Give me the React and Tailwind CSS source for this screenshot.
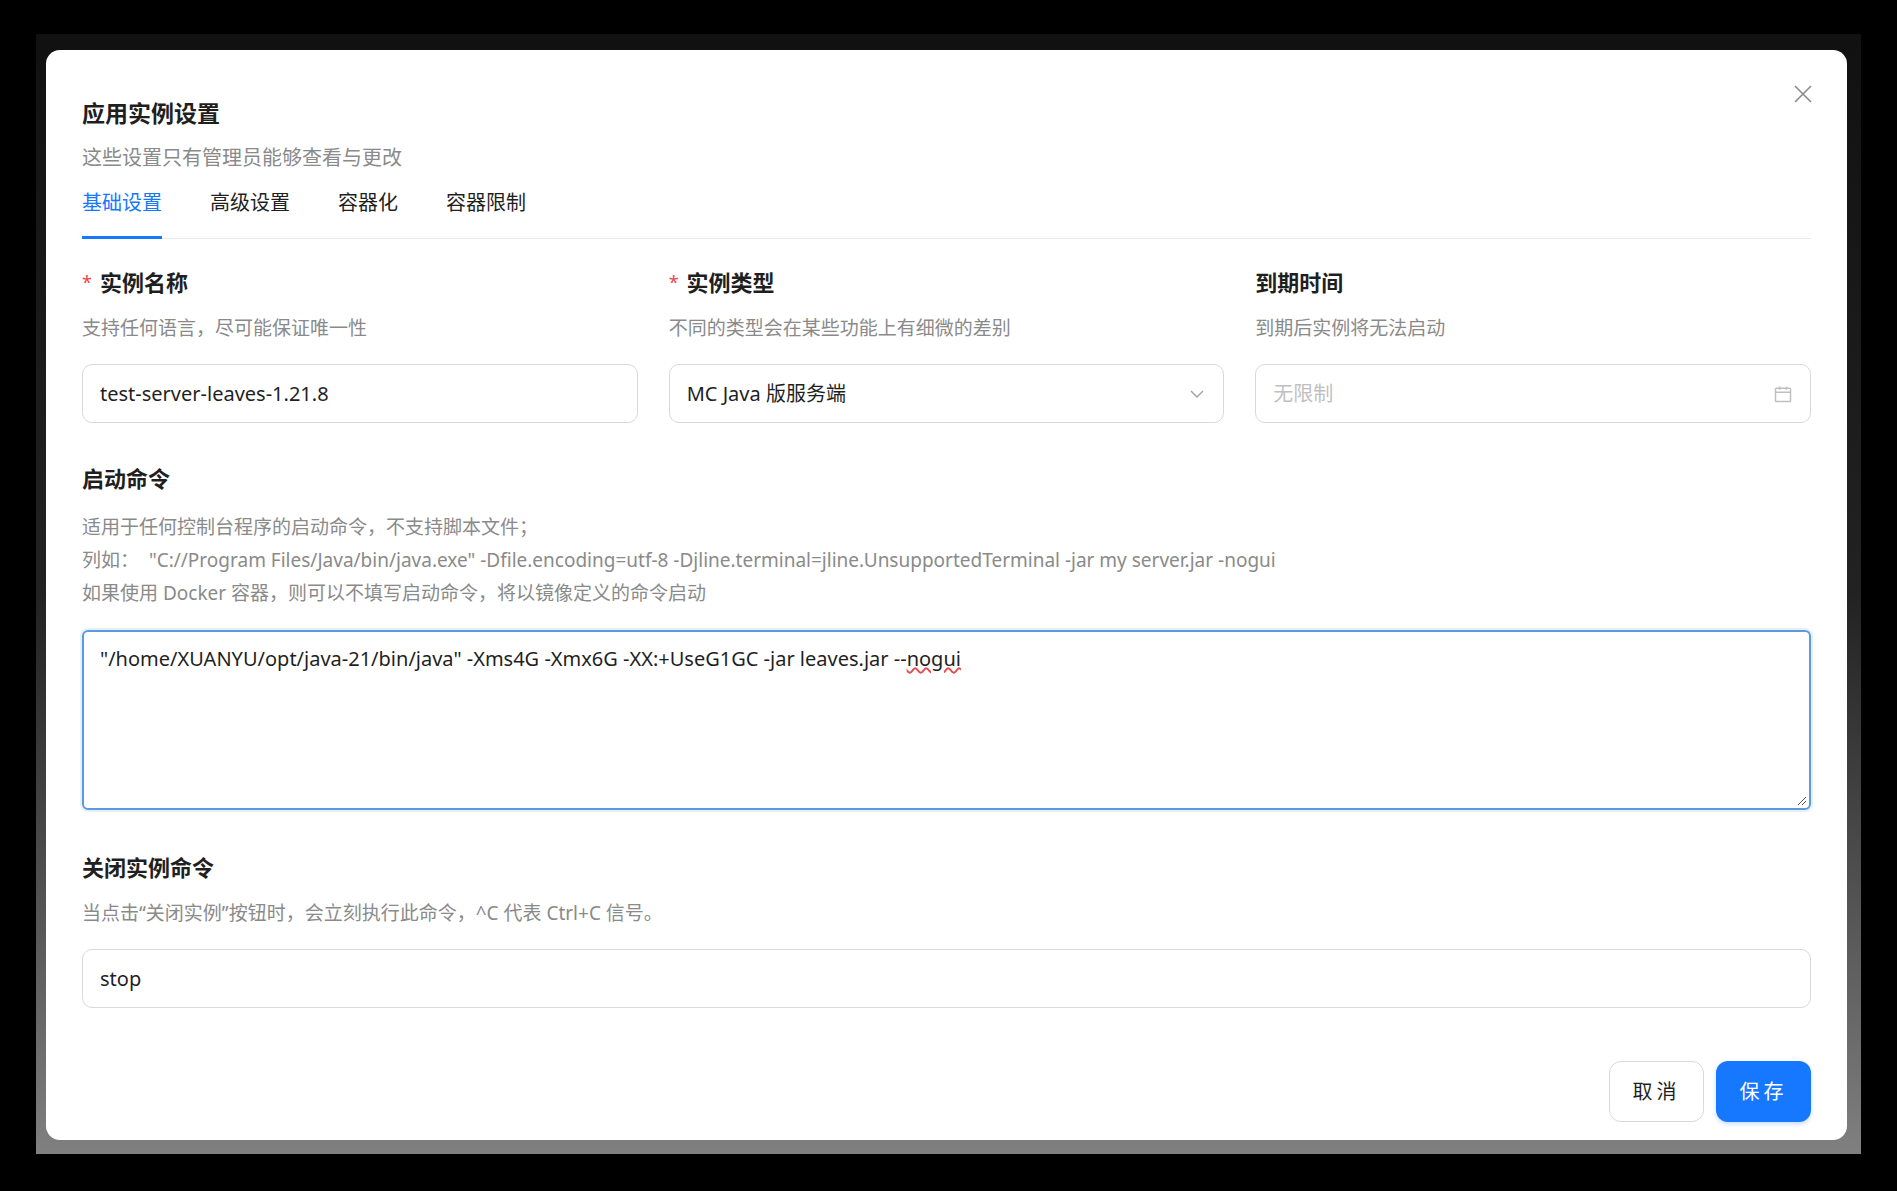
import React from "react";

const font = { fontFamily: '"Noto Sans", "Noto Sans CJK SC", sans-serif' };

function Label({ req, children }) {
  return (
    <div className="text-[22px] font-bold text-[#1f1f1f] leading-none flex items-center">
      {req && <span className="text-[#e5484d] text-[18px] mr-2 font-normal">*</span>}
      {children}
    </div>
  );
}

function Hint({ children }) {
  return <div className="text-[19px] text-[#8a8a8a] mt-[26px] leading-none">{children}</div>;
}

export default function App() {
  return (
    <div className="w-[1897px] h-[1191px] bg-black pt-[34px] pl-[36px]" style={font}>
      <div className="w-[1825px] h-[1120px] bg-gradient-to-b from-[#111] via-[#222] to-[#808080] pt-[16px] pl-[10px]">
        <div className="w-[1801px] h-[1090px] bg-white rounded-[14px] px-[36px] pt-[36px] relative">
          <button className="absolute right-[32px] top-[32px] text-[#8a8a8a]">
            <svg width="24" height="24" viewBox="0 0 24 24" fill="none" stroke="currentColor" strokeWidth="1.6">
              <path d="M4 4L20 20M20 4L4 20" />
            </svg>
          </button>
          <div className="text-[23px] font-bold text-[#1f1f1f] leading-none mt-[16px]">应用实例设置</div>
          <div className="text-[20px] text-[#8a8a8a] mt-[23px] leading-none">这些设置只有管理员能够查看与更改</div>
          <div className="flex gap-[48px] mt-[20px] border-b border-[#ebebeb] text-[20px] text-[#1f1f1f]">
            <div className="text-[#1677ff] border-b-[3px] border-[#1677ff] pb-[18px] -mb-px">基础设置</div>
            <div className="pb-[18px]">高级设置</div>
            <div className="pb-[18px]">容器化</div>
            <div className="pb-[18px]">容器限制</div>
          </div>

          <div className="grid grid-cols-3 gap-[31px] mt-[32px]">
            <div>
              <Label req>实例名称</Label>
              <Hint>支持任何语言，尽可能保证唯一性</Hint>
              <div className="mt-[26px] h-[59px] border border-[#d9d9d9] rounded-[10px] px-[17px] flex items-center text-[20px] text-[#1f1f1f]">
                test-server-leaves-1.21.8
              </div>
            </div>
            <div>
              <Label req>实例类型</Label>
              <Hint>不同的类型会在某些功能上有细微的差别</Hint>
              <div className="mt-[26px] h-[59px] border border-[#d9d9d9] rounded-[10px] px-[17px] flex items-center justify-between text-[20px] text-[#1f1f1f]">
                MC Java 版服务端
                <svg width="18" height="18" viewBox="0 0 24 24" fill="none" stroke="#a0a0a0" strokeWidth="1.8">
                  <path d="M4 8l8 8 8-8" />
                </svg>
              </div>
            </div>
            <div>
              <Label>到期时间</Label>
              <Hint>到期后实例将无法启动</Hint>
              <div className="mt-[26px] h-[59px] border border-[#d9d9d9] rounded-[10px] px-[17px] flex items-center justify-between text-[20px] text-[#bfbfbf]">
                无限制
                <svg width="20" height="20" viewBox="0 0 24 24" fill="none" stroke="#bfbfbf" strokeWidth="1.8">
                  <rect x="3" y="5" width="18" height="16" rx="1" />
                  <path d="M3 10h18M8 3v4M16 3v4" />
                </svg>
              </div>
            </div>
          </div>

          <div className="mt-[44px]">
            <Label>启动命令</Label>
            <div className="text-[19px] text-[#8a8a8a] mt-[22px] leading-[33px]">
              <div>适用于任何控制台程序的启动命令，不支持脚本文件；</div>
              <div>列如：&nbsp;&nbsp;"C://Program Files/Java/bin/java.exe" -Dfile.encoding=utf-8 -Djline.terminal=jline.UnsupportedTerminal -jar my server.jar -nogui</div>
              <div>如果使用 Docker 容器，则可以不填写启动命令，将以镜像定义的命令启动</div>
            </div>
            <div className="mt-[20px] h-[180px] border-2 border-[#5a9be0] rounded-[6px] px-[16px] py-[12px] text-[20px] text-[#1f1f1f] shadow-[0_0_0_2px_#e6f0fc] relative">
              "/home/XUANYU/opt/java-21/bin/java" -Xms4G -Xmx6G -XX:+UseG1GC -jar leaves.jar --<span className="underline decoration-wavy decoration-[#e5484d]">nogui</span>
              <svg className="absolute right-[2px] bottom-[2px]" width="12" height="12" viewBox="0 0 12 12" stroke="#555" strokeWidth="1">
                <path d="M11 3L3 11M11 7L7 11" />
              </svg>
            </div>
          </div>

          <div className="mt-[46px]">
            <Label>关闭实例命令</Label>
            <Hint>当点击“关闭实例”按钮时，会立刻执行此命令，^C 代表 Ctrl+C 信号。</Hint>
            <div className="mt-[26px] h-[59px] border border-[#d9d9d9] rounded-[10px] px-[17px] flex items-center text-[20px] text-[#1f1f1f]">
              stop
            </div>
          </div>

          <div className="flex justify-end gap-[12px] mt-[53px]">
            <button className="w-[95px] h-[61px] border border-[#d9d9d9] rounded-[12px] text-[20px] text-[#1f1f1f] tracking-[4px]">取消</button>
            <button className="w-[95px] h-[61px] bg-[#1677ff] rounded-[12px] text-[20px] text-white tracking-[4px] shadow-[0_2px_4px_rgba(22,119,255,0.25)]">保存</button>
          </div>
        </div>
      </div>
    </div>
  );
}
